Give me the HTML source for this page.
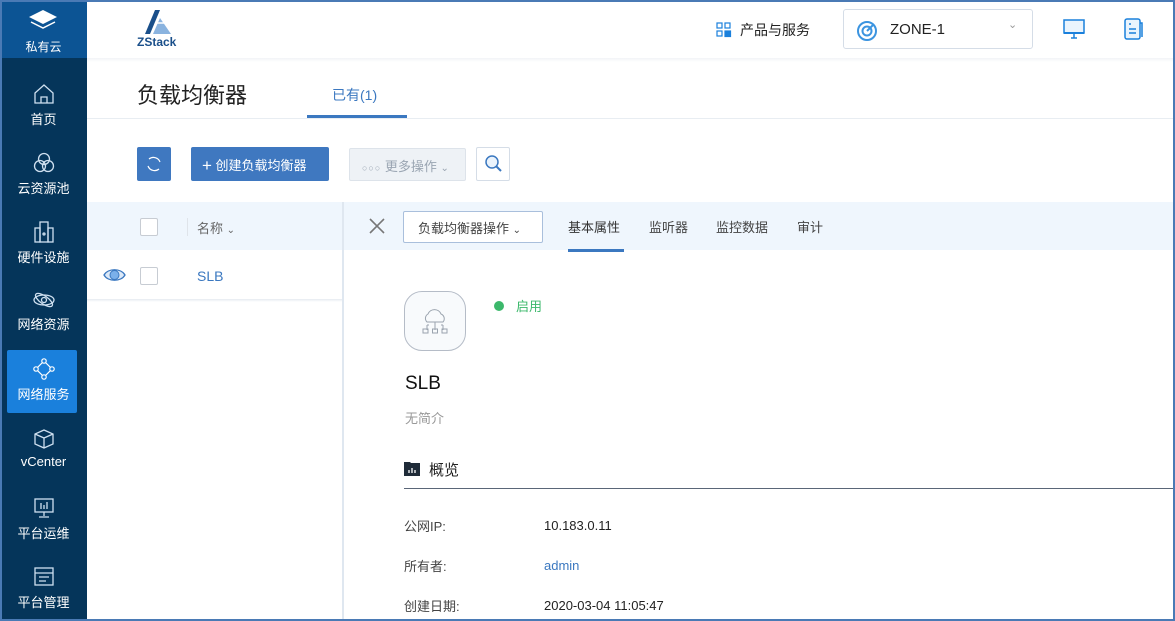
<!DOCTYPE html>
<html><head><meta charset="utf-8"><style>
*{margin:0;padding:0;box-sizing:border-box}
body{width:1175px;height:621px;overflow:hidden;background:#fff;font-family:"Liberation Sans","Noto Sans CJK SC",sans-serif;position:relative}
.abs{position:absolute}
.frame{position:absolute;left:0;top:0;width:1175px;height:621px;border:2px solid #4a7ab5;z-index:50;pointer-events:none}
.side{left:0;top:0;width:87px;height:621px;background:#05355a}
.logo{left:0;top:0;width:87px;height:58px;background:#0c5494}
.nav{position:absolute;left:0;width:87px;text-align:center;color:#fff;font-size:13px}
.nav svg{display:block;margin:0 auto 4px}
.t{position:absolute;white-space:nowrap}
</style></head><body>
<div class="frame"></div>
<div class="abs side"></div>
<div class="abs logo"></div>
<svg class="abs" style="left:27px;top:9px" width="32" height="24" viewBox="0 0 32 24"><path d="M16 1L30 8L16 15L2 8Z" fill="#fff"/><path d="M4 13L16 19L28 13" fill="none" stroke="#fff" stroke-width="1.5"/></svg>
<div class="t" style="left:0;width:87px;text-align:center;top:38px;color:#fff;font-size:12px">私有云</div>

<div class="nav" style="top:83px"><svg width="22" height="22" viewBox="0 0 22 22" fill="none" stroke="#cfe0f0" stroke-width="1.3"><path d="M2 10L11 2L20 10V20H2Z"/><path d="M8 20V14H14V20"/></svg>首页</div>
<div class="nav" style="top:152px"><svg width="22" height="22" viewBox="0 0 22 22" fill="none" stroke="#cfe0f0" stroke-width="1.3"><circle cx="11" cy="7" r="5.5"/><circle cx="7" cy="14" r="5.5"/><circle cx="15" cy="14" r="5.5"/></svg>云资源池</div>
<div class="nav" style="top:221px"><svg width="22" height="22" viewBox="0 0 22 22" fill="none" stroke="#cfe0f0" stroke-width="1.3"><rect x="7" y="1" width="8" height="20"/><rect x="2" y="7" width="5" height="14"/><rect x="15" y="7" width="5" height="14"/><circle cx="11" cy="13" r="1"/></svg>硬件设施</div>
<div class="nav" style="top:290px"><svg width="22" height="20" viewBox="0 0 22 20" fill="none" stroke="#cfe0f0" stroke-width="1.3"><ellipse cx="11" cy="10" rx="10" ry="5"/><ellipse cx="11" cy="10" rx="10" ry="4" transform="rotate(35 11 10)"/><circle cx="11" cy="10" r="2.5"/></svg>网络资源</div>
<div class="abs" style="left:7px;top:350px;width:70px;height:63px;background:#1a80dc;border-radius:2px"></div>
<div class="nav" style="top:358px;font-size:13px"><svg width="22" height="22" viewBox="0 0 22 22" fill="none" stroke="#fff" stroke-width="1.2"><path d="M11 3L19 11L11 19L3 11Z"/><circle cx="11" cy="3" r="2.2" fill="#1a80dc"/><circle cx="19" cy="11" r="2.2" fill="#1a80dc"/><circle cx="11" cy="19" r="2.2" fill="#1a80dc"/><circle cx="3" cy="11" r="2.2" fill="#1a80dc"/></svg>网络服务</div>
<div class="nav" style="top:428px"><svg width="22" height="22" viewBox="0 0 22 22" fill="none" stroke="#cfe0f0" stroke-width="1.3"><path d="M11 2L20 6V16L11 20L2 16V6Z"/><path d="M2 6L11 10L20 6M11 10V20"/></svg>vCenter</div>
<div class="nav" style="top:497px"><svg width="22" height="22" viewBox="0 0 22 22" fill="none" stroke="#cfe0f0" stroke-width="1.3"><rect x="2" y="2" width="18" height="13"/><path d="M8 6V12M11 8V12M14 5V12M11 15V19M6 20H16"/></svg>平台运维</div>
<div class="nav" style="top:566px"><svg width="22" height="22" viewBox="0 0 22 22" fill="none" stroke="#cfe0f0" stroke-width="1.3"><rect x="2" y="2" width="18" height="17"/><path d="M2 7H20M6 11H16M6 15H13"/></svg>平台管理</div>

<!-- header -->
<div class="abs" style="left:87px;top:58px;width:1088px;height:4px;background:linear-gradient(#f2f4f7,#fff)"></div>
<svg class="abs" style="left:144px;top:9px" width="32" height="26" viewBox="0 0 32 26"><path d="M11 1L16 1L6 25H1Z" fill="#1a4f8a"/><path d="M16 9L27 25H9Z" fill="#8ab3df"/><path d="M12 14H23" stroke="#fff" stroke-width="1.5"/></svg>
<div class="t" style="left:137px;top:35px;font-size:12px;font-weight:bold;color:#1a4f8a">ZStack</div>
<svg class="abs" style="left:716px;top:22px" width="16" height="16" viewBox="0 0 16 16" fill="none" stroke="#1a80dc" stroke-width="1.2"><rect x="1" y="1" width="5" height="5"/><rect x="9" y="1" width="5" height="5"/><rect x="1" y="9" width="5" height="5"/><rect x="9" y="9" width="5.5" height="5.5" fill="#1a80dc"/></svg>
<div class="t" style="left:740px;top:20px;font-size:14px;color:#222">产品与服务</div>
<div class="abs" style="left:843px;top:9px;width:190px;height:40px;border:1px solid #d5dde7;border-radius:3px"></div>
<svg class="abs" style="left:856px;top:20px" width="22" height="22" viewBox="0 0 22 22" fill="none" stroke="#3b94e0" stroke-width="2"><circle cx="11" cy="11" r="9"/><circle cx="11" cy="11" r="4.5"/><path d="M11 11L18 4"/></svg>
<div class="t" style="left:890px;top:21px;font-size:15px;color:#222">ZONE-1</div>
<div class="t" style="left:1008px;top:18px;font-size:11px;color:#999">&#8964;</div>
<svg class="abs" style="left:1063px;top:19px" width="22" height="20" viewBox="0 0 22 20"><rect x="1" y="1" width="20" height="13" fill="#eaf4fd" stroke="#1a80dc" stroke-width="1.5"/><rect x="1" y="13" width="20" height="2" fill="#1a80dc"/><path d="M8 19H14M11 15V19" stroke="#1a80dc" stroke-width="1.5"/></svg>
<svg class="abs" style="left:1124px;top:18px" width="20" height="22" viewBox="0 0 20 22"><rect x="1" y="1" width="15" height="20" rx="2" fill="#eaf4fd" stroke="#1a80dc" stroke-width="1.5"/><path d="M16 5H18V19" stroke="#1a80dc" stroke-width="1.5" fill="none"/><path d="M5 6H7M5 11H12M5 15H12" stroke="#1a80dc" stroke-width="1.5"/></svg>

<div class="t" style="left:137px;top:78px;font-size:22px;color:#222">负载均衡器</div>
<div class="t" style="left:332px;top:85px;font-size:14px;color:#3b78c0">已有(1)</div>
<div class="abs" style="left:87px;top:118px;width:1086px;height:1px;background:#e8edf2"></div>
<div class="abs" style="left:307px;top:115px;width:100px;height:3px;background:#3b78c0"></div>

<!-- toolbar -->
<div class="abs" style="left:137px;top:147px;width:34px;height:34px;background:#3f78c0;border-radius:2px"></div>
<svg class="abs" style="left:145px;top:155px" width="18" height="18" viewBox="0 0 18 18" fill="none" stroke="#fff" stroke-width="1.2"><path d="M4 4A7 7 0 0 1 15 7M14 14A7 7 0 0 1 3 11"/></svg>
<div class="abs" style="left:191px;top:147px;width:138px;height:34px;background:#3f78c0;border-radius:2px"></div>
<div class="t" style="left:202px;top:155px;font-size:13px;color:#fff"><span style="font-size:17px;position:relative;top:1px">+</span> 创建负载均衡器</div>
<div class="abs" style="left:349px;top:148px;width:117px;height:33px;background:#eef2f6;border:1px solid #dde3ea;border-radius:2px"></div>
<div class="t" style="left:362px;top:156px;font-size:13px;color:#9aa5b2"><span style="font-size:9px;letter-spacing:1px">○○○</span> 更多操作 <span style="font-size:10px">&#8964;</span></div>
<div class="abs" style="left:476px;top:147px;width:34px;height:34px;border:1px solid #d5dde7;border-radius:2px"></div>
<svg class="abs" style="left:484px;top:154px" width="20" height="20" viewBox="0 0 20 20" fill="none" stroke="#3b78c0" stroke-width="1.5"><circle cx="8" cy="8" r="6" fill="#eaf3fc"/><path d="M12.5 12.5L17 17" stroke-width="2"/></svg>

<!-- table -->
<div class="abs" style="left:87px;top:202px;width:1086px;height:48px;background:#eff6fd"></div>
<div class="abs" style="left:140px;top:218px;width:18px;height:18px;border:1px solid #c7ccd3;background:#fff;border-radius:2px"></div>
<div class="abs" style="left:187px;top:218px;width:1px;height:18px;background:#dfe4ea"></div>
<div class="t" style="left:197px;top:218px;font-size:13px;color:#666">名称 <span style="font-size:10px">&#8964;</span></div>
<svg class="abs" style="left:103px;top:266px" width="23" height="18" viewBox="0 0 23 18"><path d="M1 9C5 2 18 2 22 9C18 16 5 16 1 9Z" fill="#dce9f8" stroke="#3b78c0" stroke-width="1.3"/><circle cx="11.5" cy="9" r="4.5" fill="#7bb0ea" stroke="#3b78c0"/></svg>
<div class="abs" style="left:140px;top:267px;width:18px;height:18px;border:1px solid #c7ccd3;border-radius:2px"></div>
<div class="t" style="left:197px;top:268px;font-size:14px;color:#3b78c0">SLB</div>
<div class="abs" style="left:87px;top:299px;width:255px;height:3px;background:linear-gradient(#e6ebf0,#fff)"></div>

<!-- detail -->
<div class="abs" style="left:342px;top:202px;width:2px;height:419px;background:#dfe7f0"></div>
<svg class="abs" style="left:368px;top:217px" width="18" height="18" viewBox="0 0 18 18" stroke="#777" stroke-width="1.6"><path d="M2 2L16 16M16 2L2 16"/></svg>
<div class="abs" style="left:403px;top:211px;width:140px;height:32px;border:1px solid #a9bfdc;border-radius:2px;background:#fff"></div>
<div class="t" style="left:418px;top:218px;font-size:13px;color:#444">负载均衡器操作 <span style="font-size:10px">&#8964;</span></div>
<div class="t" style="left:568px;top:217px;font-size:13px;color:#333">基本属性</div>
<div class="abs" style="left:568px;top:249px;width:56px;height:3px;background:#3b78c0"></div>
<div class="t" style="left:649px;top:217px;font-size:13px;color:#444">监听器</div>
<div class="t" style="left:716px;top:217px;font-size:13px;color:#444">监控数据</div>
<div class="t" style="left:797px;top:217px;font-size:13px;color:#444">审计</div>

<div class="abs" style="left:404px;top:291px;width:62px;height:60px;border:1px solid #b5bcc7;border-radius:18px;background:#f8fafc"></div>
<svg class="abs" style="left:418px;top:304px" width="34" height="34" viewBox="0 0 34 34" fill="none" stroke="#9aa3ae" stroke-width="1"><path d="M9 18A5 5 0 0 1 10 10A7 7 0 0 1 23 10A5 5 0 0 1 25 18Z"/><path d="M17 18V26M9 21V26M25 21V26M11 21H9M23 21H25"/><rect x="5" y="25" width="5" height="4"/><rect x="14.5" y="25" width="5" height="4"/><rect x="24" y="25" width="5" height="4"/></svg>
<div class="abs" style="left:494px;top:301px;width:10px;height:10px;border-radius:50%;background:#3cb86b"></div>
<div class="t" style="left:516px;top:296px;font-size:13px;color:#3cb86b">启用</div>
<div class="t" style="left:405px;top:373px;font-size:19px;color:#111">SLB</div>
<div class="t" style="left:405px;top:408px;font-size:13px;color:#999">无简介</div>
<svg class="abs" style="left:404px;top:461px" width="16" height="15" viewBox="0 0 16 15"><path d="M0 1H6L7 2H16V15H0Z" fill="#1f2b38"/><path d="M5 12V9M8 12V7M11 12V9" stroke="#fff" stroke-width="1.3"/></svg>
<div class="t" style="left:429px;top:459px;font-size:15px;color:#222">概览</div>
<div class="abs" style="left:404px;top:488px;width:769px;height:1px;background:#5a6678"></div>
<div class="t" style="left:404px;top:516px;font-size:13px;color:#444">公网IP:</div>
<div class="t" style="left:544px;top:518px;font-size:13px;color:#222">10.183.0.11</div>
<div class="t" style="left:404px;top:556px;font-size:13px;color:#444">所有者:</div>
<div class="t" style="left:544px;top:558px;font-size:13px;color:#3b78c0">admin</div>
<div class="t" style="left:404px;top:596px;font-size:13px;color:#444">创建日期:</div>
<div class="t" style="left:544px;top:598px;font-size:13px;color:#222">2020-03-04 11:05:47</div>
</body></html>
